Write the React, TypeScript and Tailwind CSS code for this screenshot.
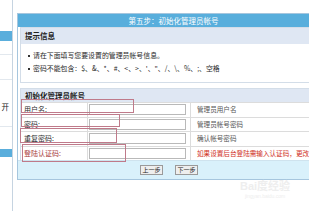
// 安装向导 第五步 — 初始化管理员帐号 (截图复刻)

const descs = [
  { label: '用户名:', desc: '管理员用户名', red: false },
  { label: '密码:', desc: '管理员帐号密码', red: false },
  { label: '重复密码:', desc: '确认帐号密码', red: false },
  { label: '登陆认证码:', desc: '如果设置后台登陆需输入认证码，更改', red: true },
]

export default function App() {
  return (
    <div className="relative w-[309px] h-[211px] overflow-hidden bg-white flex font-['Noto_Sans_CJK_SC','Noto_Sans',sans-serif] text-[#333]">
      {/* 左侧菜单 */}
      <aside className="w-[13px] shrink-0 h-full border-r border-[#c6d4e1] flex flex-col">
        <div className="h-[31px]" />
        <div className="h-[10px] bg-[#5aaedc]" />
        <div className="h-[14px] border-b border-[#e2e8ee]" />
        <div className="h-[25px] border-b border-[#e2e8ee]" />
        <div className="h-[17px]" />
        <div className="h-[20px] flex items-center justify-end pr-[3px] text-[7.5px] leading-none text-[#222]">开</div>
        <div className="h-[10px] border-b border-[#e2e8ee]" />
        <div className="h-[22px]" />
        <div className="h-[8px] bg-[#5aaedc]" />
      </aside>

      {/* 主面板 */}
      <main className="ml-[4px] mt-[13px] w-[312px] shrink-0 self-start border border-[#a6c6de] border-r-0">
        <div className="h-[13px] bg-[#58aedc] flex items-center justify-center text-white text-[7.5px] leading-none">
          第五步：初始化管理员帐号
        </div>

        <div className="px-[2px]">
          {/* 提示信息 */}
          <div className="border border-[#d3dde8] border-r-0">
            <div className="h-[16px] bg-[#dfe7f3] flex items-center pl-[4px] text-[7.5px] font-bold leading-none text-[#222]">
              提示信息
            </div>
            <div className="pt-[5px] pb-[7px] pl-[7px]">
              {['请在下面填写您要设置的管理员帐号信息。', '密码不能包含：$、&、*、#、<、>、\'、"、/、\\、%、;、空格'].map((t) => (
                <div key={t} className="h-[13px] flex items-center gap-[3px] text-[6.9px] leading-none text-[#2a2a2a] whitespace-nowrap">
                  <span className="w-[2px] h-[2px] bg-[#333] shrink-0" />
                  {t}
                </div>
              ))}
            </div>
          </div>

          {/* 初始化管理员帐号 */}
          <div className="mt-[5px] border border-[#d3dde8] border-r-0 border-b-0">
            <div className="h-[13px] bg-[#dfe7f3] flex items-center pl-[4px] text-[7.5px] font-bold leading-none text-[#222]">
              初始化管理员帐号
            </div>
            {descs.map((r) => (
              <div key={r.label} className="h-[14.5px] flex border-t border-[#dcdcdc]">
                <div className={`w-[67px] shrink-0 flex items-center pl-[3px] text-[7px] leading-none border-r border-[#dcdcdc] ${r.red ? 'text-[#a83a3a]' : 'text-[#2a2a2a]'}`}>
                  {r.label}
                </div>
                <div className="w-[103px] shrink-0 flex items-center pl-[1px] border-r border-[#dcdcdc]">
                  <div className="w-[97px] h-[11px] border border-[#b9b9b9] bg-white" />
                </div>
                <div className={`flex-1 flex items-center pl-[6px] text-[6.6px] leading-none whitespace-nowrap ${r.red ? 'text-[#d0301e]' : 'text-[#555]'}`}>
                  {r.desc}
                </div>
              </div>
            ))}
          </div>
        </div>

        {/* 按钮 */}
        <div className="h-[19px] bg-[#d9f1fb] border-t border-[#cfe3ee] flex items-center gap-[12px] pl-[122px]">
          {['上一步', '下一步'].map((b) => (
            <button
              key={b}
              className="w-[23px] h-[10px] border border-[#9a9a9a] bg-[#eeeeee] text-[6px] leading-none text-[#222] flex items-center justify-center"
            >
              {b}
            </button>
          ))}
        </div>
      </main>

      {/* 红色标注框 */}
      <div className="absolute left-[21px] top-[99px] w-[113px] h-[14px] border border-[#bf7a8a]" />
      <div className="absolute left-[21px] top-[114px] w-[99px] h-[13px] border border-[#bf7a8a]" />
      <div className="absolute left-[20px] top-[128px] w-[97px] h-[15px] border border-[#bf7a8a]" />
      <div className="absolute left-[22px] top-[144px] w-[104px] h-[18px] border border-[#bf7a8a]" />

      {/* 水印 */}
      <div className="absolute left-[240px] top-[181px] flex flex-col items-center text-[#eeeeee] leading-none">
        <span className="text-[11px] font-bold font-['Liberation_Sans','Noto_Sans_CJK_SC',sans-serif]">Bai度经验</span>
        <span className="text-[5px] mt-[2px] font-['Liberation_Sans',sans-serif]">jingyan.baidu.com</span>
      </div>
    </div>
  )
}
